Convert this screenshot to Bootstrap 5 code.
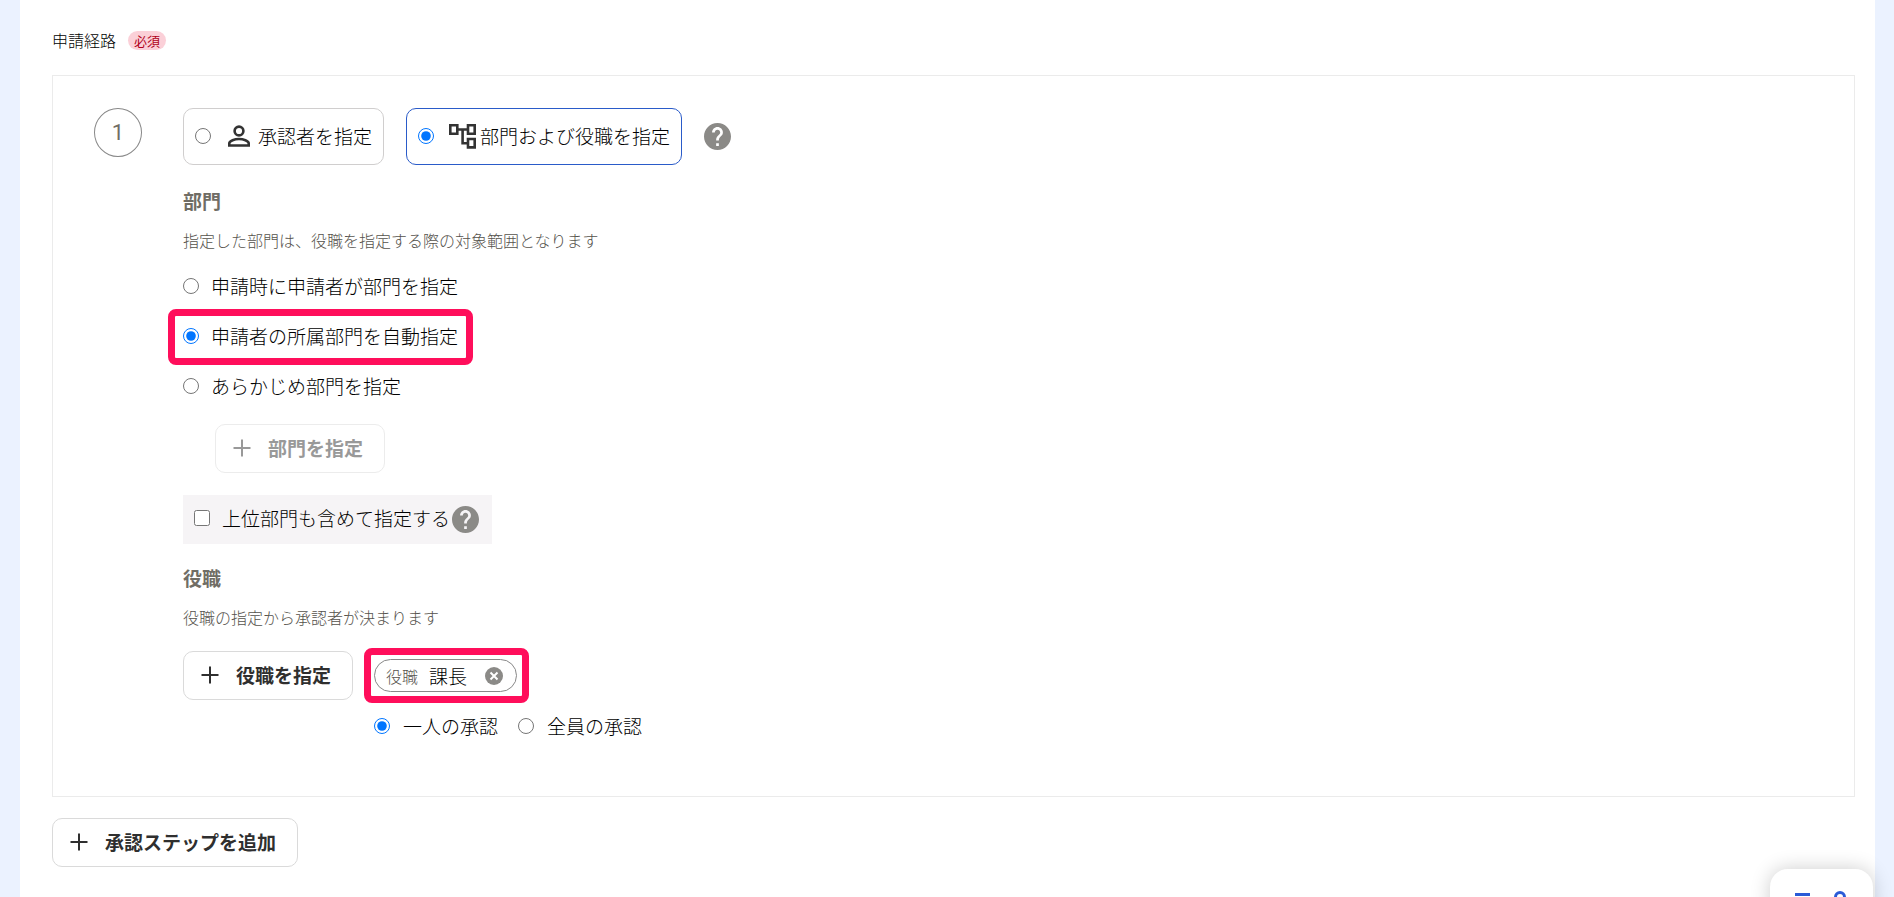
<!DOCTYPE html>
<html lang="ja">
<head>
<meta charset="utf-8">
<meta name="viewport" content="width=device-width, initial-scale=1">
<title>申請経路</title>
<link rel="stylesheet" href="https://cdn.jsdelivr.net/npm/bootstrap@5.3.0/dist/css/bootstrap.min.css">
<style>
  body {
    background: #ebf2ff;
    color: #000;
    font-family: "Noto Sans CJK JP", sans-serif;
    font-size: 19px;
    font-weight: 300;
    line-height: 28px;
  }
  .page-panel { background: #fff; min-height: 100vh; margin: 0 19px 0 20px; padding: 27px 20px 28px 32px; }
  .field-title { font-size: 16px; line-height: 26px; }
  .required-tag { background: #fbd0d8; color: #b00020; font-size: 13px; line-height: 19px; font-weight: 400; padding: 0 6px; margin-left: 12px; }
  .route-box { border: 1px solid #ebebeb; padding: 32px 41px 56px; margin: 22px 0 21px; }
  .step-no { width: 48px; height: 49px; border: 1px solid #888; border-radius: 50%; color: #706d65; font-family: Roboto, sans-serif; font-size: 22px; font-weight: 400; }
  .step-body { margin-left: 41px; }
  input[type=radio], input[type=checkbox] { width: 16px; height: 16px; margin: 0; flex: none; }
  .type-row { gap: 22px; margin-bottom: 22px; }
  .type-option { height: 57px; border: 1px solid #d0cece; border-radius: 10px; padding: 0 11px 1px; }
  .type-option.selected { border-color: #2a5bc9; }
  .type-icon { margin-left: 15px; }
  .sub-title { color: #706d65; font-size: 19px; line-height: 28px; font-weight: 700; margin: 0; }
  .sub-note { color: #55524c; font-size: 16px; line-height: 24px; margin: 13px 0 9px; }
  .dept-row { height: 50px; }
  .marked { position: relative; }
  .marked::after { content: ""; position: absolute; border: 7px solid #ff0e5b; border-radius: 8px; pointer-events: none; }
  .marked-row::after { inset: -2px -15px -4px; }
  .marked-chip::after { inset: -12px -13px -12px -11px; }
  .add-btn { height: 49px; border: 1px solid #dadada; border-radius: 10px; background: #fff; color: #2f2f2f; font-size: 19px; font-weight: 700; line-height: 28px; padding: 0 21px 2px 17px; }
  .add-btn:disabled { border-color: #ececec; background: #fff; color: #999; opacity: 1; }
  .plus-icon { margin-right: 17px; }
  .dept-add { margin: 13px 0 0 32px; }
  .include-upper { height: 49px; background: #f6f4f6; gap: 2px; padding: 0 13px 0 11px; margin: 22px 0 20px; }
  .help-btn { color: #8b8a87; line-height: 0; }
  .role-area { gap: 21px; margin-top: 22px; }
  .role-detail { gap: 20px; margin-top: 8px; }
  .role-chip { height: 33px; border: 1px solid #888; border-radius: 17px; gap: 11px; padding: 0 13px 0 11px; }
  .chip-kind { color: #55524c; font-size: 16px; }
  .chip-clear { margin-left: 7px; }
  .approval { gap: 20px; }
  .approval label { gap: 13px; }
  .float-menu { bottom: -32px; right: 21px; width: 103px; height: 60px; border-radius: 18px; background: #fff; box-shadow: 0 0 20px rgba(0,0,0,.2); padding: 16px 20px; color: #2a5bd7; }
</style>
</head>
<body>
<svg class="d-none" aria-hidden="true">
  <symbol id="i-help" viewBox="2 2 20 20"><path fill="currentColor" d="M12 2C6.48 2 2 6.48 2 12s4.480 10 10 10 10-4.480 10-10S17.520 2 12 2zm1 17h-2v-2h2v2zm2.070-7.750-.9.920C13.450 12.900 13 13.500 13 15h-2v-.5c0-1.100.450-2.100 1.170-2.830l1.240-1.260c.370-.360.590-.860.590-1.410 0-1.100-.9-2-2-2s-2 .9-2 2H8c0-2.210 1.790-4 4-4s4 1.790 4 4c0 .880-.360 1.680-.930 2.250z"/></symbol>
  <symbol id="i-plus" viewBox="0 0 18 18"><path fill="none" stroke="currentColor" stroke-width="2" d="M9 0.500v17M0.500 9h17"/></symbol>
</svg>

<main class="page-panel">
  <div class="field-title d-flex align-items-center">
    <span>申請経路</span>
    <span class="required-tag rounded-pill">必須</span>
  </div>

  <section class="route-box d-flex align-items-start">
    <div class="step-no d-flex align-items-center justify-content-center flex-shrink-0">1</div>
    <div class="step-body flex-grow-1">
      <div class="type-row d-flex align-items-center">
        <label class="type-option d-flex align-items-center">
          <input type="radio" name="type">
          <svg class="type-icon me-2" width="24" height="22" viewBox="0 0 24 22" aria-hidden="true"><g fill="none" stroke="#333" stroke-width="2.600"><circle cx="13" cy="6" r="4.400"/><path d="M3.300 20.500v-2.200c0-2.600 5.500-4.300 9.700-4.300s9.700 1.700 9.700 4.300v2.200z"/></g></svg>
          <span>承認者を指定</span>
        </label>
        <label class="type-option selected d-flex align-items-center">
          <input type="radio" name="type" checked>
          <svg class="type-icon me-1" width="27" height="25" viewBox="0 0 27 25" aria-hidden="true"><g fill="none" stroke="#333" stroke-width="2.600"><path d="M1.300 1.300h7v8.400h-7zM19 1.300h6.700v8.400H19zM19 15h6.700v8.400H19zM8.300 5.500H19M13.600 5.500v13.700H19"/></g></svg>
          <span>部門および役職を指定</span>
        </label>
        <button type="button" class="help-btn btn border-0 p-0" aria-label="ヘルプ"><svg width="27" height="27"><use href="#i-help"/></svg></button>
      </div>

      <h2 class="sub-title">部門</h2>
      <p class="sub-note">指定した部門は、役職を指定する際の対象範囲となります</p>
      <div class="d-flex flex-column align-items-start">
        <label class="dept-row d-flex align-items-center gap-2"><input type="radio" name="dept" class="me-1">申請時に申請者が部門を指定</label>
        <label class="dept-row marked marked-row d-flex align-items-center gap-2"><input type="radio" name="dept" class="me-1" checked>申請者の所属部門を自動指定</label>
        <label class="dept-row d-flex align-items-center gap-2"><input type="radio" name="dept" class="me-1">あらかじめ部門を指定</label>
        <button type="button" class="add-btn dept-add btn d-flex align-items-center" disabled><svg class="plus-icon" width="18" height="18"><use href="#i-plus"/></svg>部門を指定</button>
        <div class="include-upper d-flex align-items-center">
          <label class="d-flex align-items-center gap-2 mb-1"><input type="checkbox" class="me-1">上位部門も含めて指定する</label>
          <button type="button" class="help-btn btn border-0 p-0" aria-label="ヘルプ"><svg width="27" height="27"><use href="#i-help"/></svg></button>
        </div>
      </div>

      <h2 class="sub-title">役職</h2>
      <p class="sub-note">役職の指定から承認者が決まります</p>
      <div class="role-area d-flex align-items-start">
        <button type="button" class="add-btn btn d-flex align-items-center"><svg class="plus-icon" width="18" height="18"><use href="#i-plus"/></svg>役職を指定</button>
        <div class="role-detail d-flex flex-column align-items-start">
          <div class="role-chip marked marked-chip d-flex align-items-center">
            <span class="chip-kind">役職</span><span>課長</span>
            <button type="button" class="help-btn chip-clear btn border-0 p-0" aria-label="削除"><svg width="18" height="18" viewBox="0 0 18 18"><circle cx="9" cy="9" r="9" fill="currentColor"/><path d="M5.500 5.500l7 7M12.500 5.500l-7 7" stroke="#fff" stroke-width="2"/></svg></button>
          </div>
          <div class="approval d-flex">
            <label class="d-flex align-items-center"><input type="radio" name="appr" checked>一人の承認</label>
            <label class="d-flex align-items-center"><input type="radio" name="appr">全員の承認</label>
          </div>
        </div>
      </div>
    </div>
  </section>

  <button type="button" class="add-btn btn d-flex align-items-center"><svg class="plus-icon" width="18" height="18"><use href="#i-plus"/></svg>承認ステップを追加</button>
</main>

<div class="float-menu position-fixed d-flex justify-content-between" aria-hidden="true">
  <svg width="24" height="24" viewBox="0 0 24 24"><path d="M5 9.500h15M5 16h15M5 22h15" stroke="currentColor" stroke-width="3"/></svg>
  <svg width="24" height="24" viewBox="0 0 24 24"><circle cx="11" cy="12" r="4.500" fill="none" stroke="currentColor" stroke-width="3"/></svg>
</div>
<script src="https://cdn.jsdelivr.net/npm/bootstrap@5.3.0/dist/js/bootstrap.bundle.min.js"></script>
</body>
</html>
